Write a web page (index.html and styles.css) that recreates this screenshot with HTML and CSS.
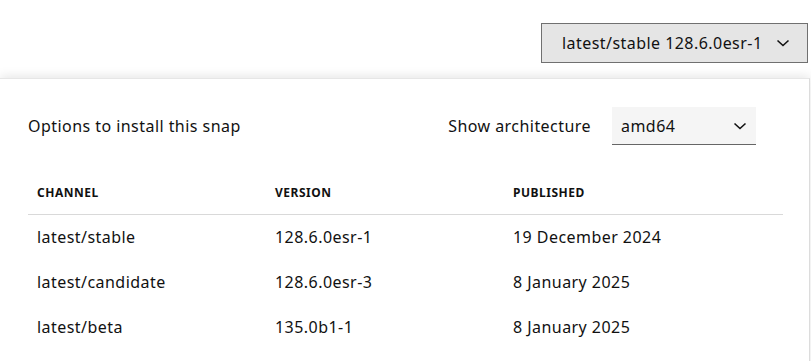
FILE: index.html
```html
<!DOCTYPE html>
<html lang="en">
<head>
<meta charset="utf-8">
<title>Install snap</title>
<link rel="stylesheet" href="styles.css">
</head>
<body>
<header class="top">
  <button class="channel-btn" type="button">
    <span>latest/stable 128.6.0esr-1</span>
    <svg class="chev" width="14" height="8" viewBox="0 0 14 8"><path d="M1.5 1.5 L7 6.5 L12.5 1.5" fill="none" stroke="#111" stroke-width="1.6"/></svg>
  </button>
</header>
<section class="panel">
  <div class="panel-head">
    <h2 class="title">Options to install this snap</h2>
    <div class="arch">
      <span class="arch-label">Show architecture</span>
      <div class="select">
        <span>amd64</span>
        <svg class="chev" width="14" height="8" viewBox="0 0 14 8"><path d="M1.5 1.5 L7 6.5 L12.5 1.5" fill="none" stroke="#111" stroke-width="1.6"/></svg>
      </div>
    </div>
  </div>
  <div class="table">
    <div class="row head">
      <div class="cell">Channel</div>
      <div class="cell">Version</div>
      <div class="cell">Published</div>
    </div>
    <div class="row">
      <div class="cell">latest/stable</div>
      <div class="cell">128.6.0esr-1</div>
      <div class="cell">19 December 2024</div>
    </div>
    <div class="row">
      <div class="cell">latest/candidate</div>
      <div class="cell">128.6.0esr-3</div>
      <div class="cell">8 January 2025</div>
    </div>
    <div class="row">
      <div class="cell">latest/beta</div>
      <div class="cell">135.0b1-1</div>
      <div class="cell">8 January 2025</div>
    </div>
  </div>
</section>
</body>
</html>
```
FILE: styles.css
```css
* { box-sizing: border-box; }
html, body { margin: 0; padding: 0; background: #fff; }
body {
  font-family: "Noto Sans", "Open Sans", sans-serif;
  font-size: 16px;
  letter-spacing: 0.45px;
  color: #111;
  width: 811px;
  height: 361px;
  overflow: hidden;
}
.top {
  display: flex;
  justify-content: flex-end;
  padding: 23px 3px 0 0;
}
.channel-btn {
  display: flex;
  align-items: center;
  justify-content: space-between;
  width: 267px;
  height: 40px;
  padding: 0 17px 0 20px;
  background: #e5e5e5;
  border: 1px solid #707070;
  border-radius: 0;
  font: inherit;
  letter-spacing: inherit;
  color: #111;
}
.panel {
  margin-top: 15px;
  width: 810px;
  height: 300px;
  background: #fff;
  border-top: 1px solid #e6e6e6;
  border-right: 1px solid #dcdcdc;
  box-shadow: 0 -2px 10px rgba(0, 0, 0, 0.1);
  padding: 28px 26px 0 28px;
}
.panel-head {
  display: flex;
  align-items: center;
  justify-content: space-between;
  height: 38px;
  padding-right: 27px;
}
.title {
  margin: 0;
  font-size: 16px;
  font-weight: 400;
}
.arch {
  display: flex;
  align-items: center;
  gap: 21px;
}
.select {
  display: flex;
  align-items: center;
  justify-content: space-between;
  width: 144px;
  height: 38px;
  padding: 0 9px 0 9px;
  background: #f5f5f5;
  border-bottom: 1px solid #666;
}
.table {
  margin-top: 24px;
}
.row {
  display: grid;
  grid-template-columns: 238px 238px 1fr;
  align-items: center;
  height: 44.7px;
  padding-left: 9px;
}
.row.head {
  height: 46px;
  padding-top: 2px;
  border-bottom: 1px solid #d9d9d9;
  font-size: 12px;
  font-weight: 700;
  text-transform: uppercase;
  letter-spacing: 0.5px;
}
.cell { white-space: nowrap; }
```
